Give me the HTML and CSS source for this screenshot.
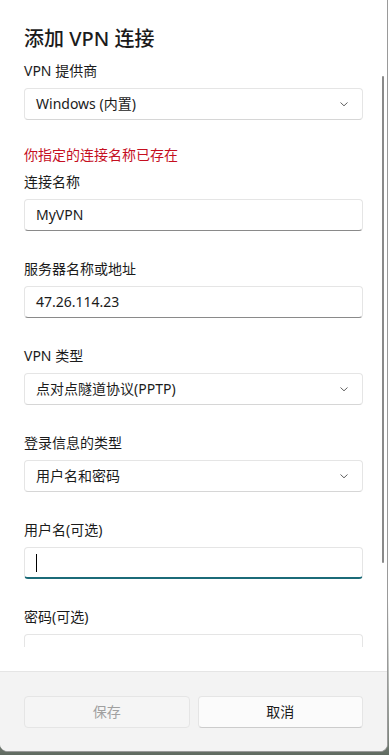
FILE: index.html
```html
<!DOCTYPE html>
<html lang="zh-CN">
<head>
<meta charset="utf-8">
<title>添加 VPN 连接</title>
<link rel="stylesheet" href="styles.css">
</head>
<body>
<div class="dialog">
  <div class="scroll">
    <h1 class="title">添加 VPN 连接</h1>
    <div class="field">
      <div class="label">VPN 提供商</div>
      <div class="control combo"><span>Windows (内置)</span><svg class="chev" width="12" height="12" viewBox="0 0 12 12"><path d="M2.5 4.5 L6 7.8 L9.5 4.5" fill="none" stroke="#616161" stroke-width="1"/></svg></div>
    </div>
    <div class="error">你指定的连接名称已存在</div>
    <div class="field first">
      <div class="label">连接名称</div>
      <div class="control text"><span>MyVPN</span></div>
    </div>
    <div class="field">
      <div class="label">服务器名称或地址</div>
      <div class="control text"><span>47.26.114.23</span></div>
    </div>
    <div class="field">
      <div class="label">VPN 类型</div>
      <div class="control combo"><span>点对点隧道协议(PPTP)</span><svg class="chev" width="12" height="12" viewBox="0 0 12 12"><path d="M2.5 4.5 L6 7.8 L9.5 4.5" fill="none" stroke="#616161" stroke-width="1"/></svg></div>
    </div>
    <div class="field">
      <div class="label">登录信息的类型</div>
      <div class="control combo"><span>用户名和密码</span><svg class="chev" width="12" height="12" viewBox="0 0 12 12"><path d="M2.5 4.5 L6 7.8 L9.5 4.5" fill="none" stroke="#616161" stroke-width="1"/></svg></div>
    </div>
    <div class="field">
      <div class="label">用户名(可选)</div>
      <div class="control text focused"><span class="caret"></span></div>
    </div>
    <div class="field">
      <div class="label">密码(可选)</div>
      <div class="control text"></div>
    </div>
  </div>
  <div class="spacer"></div>
  <div class="footer">
    <div class="btn disabled">保存</div>
    <div class="btn">取消</div>
  </div>
  <div class="scrollbar"></div>
</div>
</body>
</html>
```
FILE: styles.css
```css
* { box-sizing: border-box; }
html, body { margin: 0; padding: 0; }
body {
  width: 389px;
  height: 755px;
  overflow: hidden;
  background: linear-gradient(to bottom, #ffffff 0, #ffffff 600px, #7d857d 740px, #5f6a60 755px);
  font-family: "Noto Sans", "Noto Sans CJK SC", sans-serif;
  color: #1b1b1b;
  font-size: 14px;
}
.dialog {
  position: relative;
  width: 388px;
  height: 752px;
  background: #ffffff;
  border-right: 1px solid #9a9a9a;
  border-bottom: 1px solid #9a9a9a;
  border-radius: 0 0 8px 8px;
  overflow: hidden;
  display: flex;
  flex-direction: column;
}
.scroll {
  height: 647px;
  flex: none;
  overflow: hidden;
  padding: 25px 24px 0 24px;
}
.title {
  margin: 0 0 8px 0;
  font-size: 20px;
  line-height: 28px;
  font-weight: 500;
  font-family: "Noto Sans", "Noto Sans CJK SC", sans-serif;
}
.label {
  line-height: 20px;
  height: 20px;
  margin-bottom: 7px;
}
.field + .field { margin-top: 28px; }
.error {
  margin-top: 25px;
  line-height: 20px;
  height: 20px;
  margin-bottom: 7px;
  color: #c50f1f;
}
.control {
  width: 339px;
  height: 32px;
  border: 1px solid #e5e5e5;
  border-radius: 4px;
  background: #ffffff;
  display: flex;
  align-items: center;
  padding: 0 11px;
  line-height: 20px;
}
.combo {
  justify-content: space-between;
  border-bottom-color: #d6d6d6;
  padding-right: 12px;
}
.text {
  border-bottom: 1px solid #8a8a8a;
}
.text.focused {
  border-bottom: 2px solid #1b6b78;
}
.caret {
  display: block;
  width: 1px;
  height: 18px;
  background: #000;
}
.chev { flex: none; }
.spacer { height: 24px; flex: none; }
.footer {
  flex: 1;
  background: #f3f3f3;
  border-top: 1px solid #e5e5e5;
  padding: 24px 24px 0 24px;
  display: flex;
  gap: 8px;
}
.btn {
  flex: 1;
  height: 32px;
  border: 1px solid #e5e5e5;
  border-bottom-color: #cccccc;
  border-radius: 4px;
  background: #fbfbfb;
  display: flex;
  align-items: center;
  justify-content: center;
  line-height: 20px;
}
.btn.disabled {
  background: #f5f5f5;
  border-color: #e5e5e5;
  color: #a0a0a0;
}
.scrollbar {
  position: absolute;
  left: 382px;
  top: 76px;
  width: 2px;
  height: 487px;
  background: #8a8a8a;
  border-radius: 1px;
}
```
